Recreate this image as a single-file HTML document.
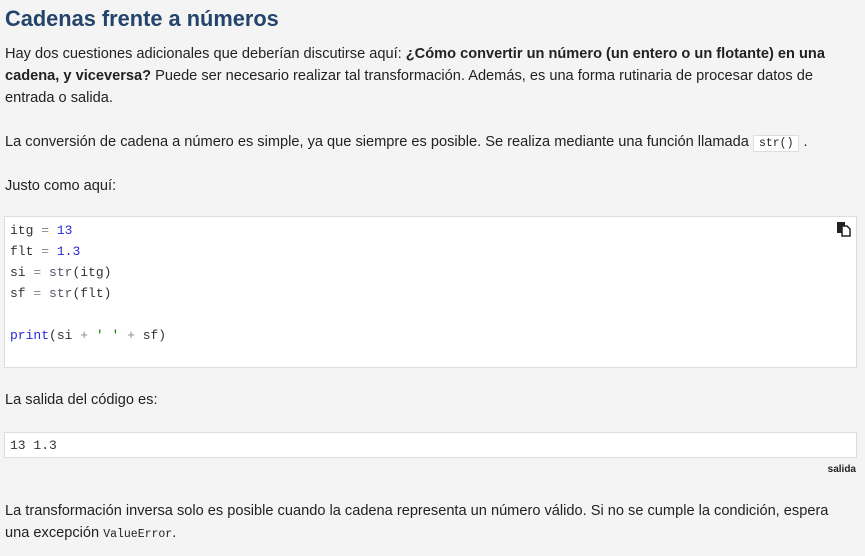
<!DOCTYPE html>
<html><head><meta charset="utf-8"><style>
body{margin:0;background:#f4f4f4;font-family:"Liberation Sans",sans-serif;color:#222;width:865px;height:556px;overflow:hidden;font-size:14.6px}
.p{position:absolute;left:5px;line-height:22px;white-space:nowrap}
h1{position:absolute;left:5px;top:6px;margin:0;font-size:21.8px;color:#24446b;font-weight:bold}
code{font-family:"Liberation Mono",monospace;font-size:11.5px}
.ic{background:#fff;border:1px solid #ddd;padding:1px 5px}
.box{position:absolute;left:4px;width:853px;box-sizing:border-box;background:#fff;border:1px solid #ddd}
.code{font-family:"Liberation Mono",monospace;font-size:13px;line-height:21px;padding:3px 5px;white-space:pre;color:#333}
.n{color:#2a2ad8}.k{color:#2a2ad8}.f{color:#556}.s{color:#080}.o{color:#888}
</style></head><body>
<h1>Cadenas frente a números</h1>
<div class="p" style="top:43px">Hay dos cuestiones adicionales que deberían discutirse aquí: <b>¿Cómo convertir un número (un entero o un flotante) en una</b></div>
<div class="p" style="top:65px"><b>cadena, y viceversa?</b> Puede ser necesario realizar tal transformación. Además, es una forma rutinaria de procesar datos de</div>
<div class="p" style="top:87px">entrada o salida.</div>
<div class="p" style="top:131px">La conversión de cadena a número es simple, ya que siempre es posible. Se realiza mediante una función llamada <code class="ic">str()</code> .</div>
<div class="p" style="top:175px">Justo como aquí:</div>
<div class="box code" style="top:216px;height:152px">itg <span class="o">=</span> <span class="n">13</span>
flt <span class="o">=</span> <span class="n">1.3</span>
si <span class="o">=</span> <span class="f">str</span>(itg)
sf <span class="o">=</span> <span class="f">str</span>(flt)

<span class="k">print</span>(si <span class="o">+</span> <span class="s">' '</span> <span class="o">+</span> sf)</div>
<svg style="position:absolute;left:836px;top:221px" width="16" height="16" viewBox="0 0 16 16"><rect x="1" y="1" width="8" height="11" fill="#222"/><path d="M6 5h5l3 3v7H6z" fill="#fff" stroke="#222" stroke-width="1.5"/></svg>
<div class="p" style="top:389px">La salida del código es:</div>
<div class="box code" style="top:432px;height:26px;line-height:19px;padding:3px 5px 2px">13 1.3</div>
<div style="position:absolute;right:9px;top:464px;font-size:10px;font-weight:bold">salida</div>
<div class="p" style="top:500px">La transformación inversa solo es posible cuando la cadena representa un número válido. Si no se cumple la condición, espera</div>
<div class="p" style="top:522px">una excepción <code>ValueError</code>.</div>
</body></html>
